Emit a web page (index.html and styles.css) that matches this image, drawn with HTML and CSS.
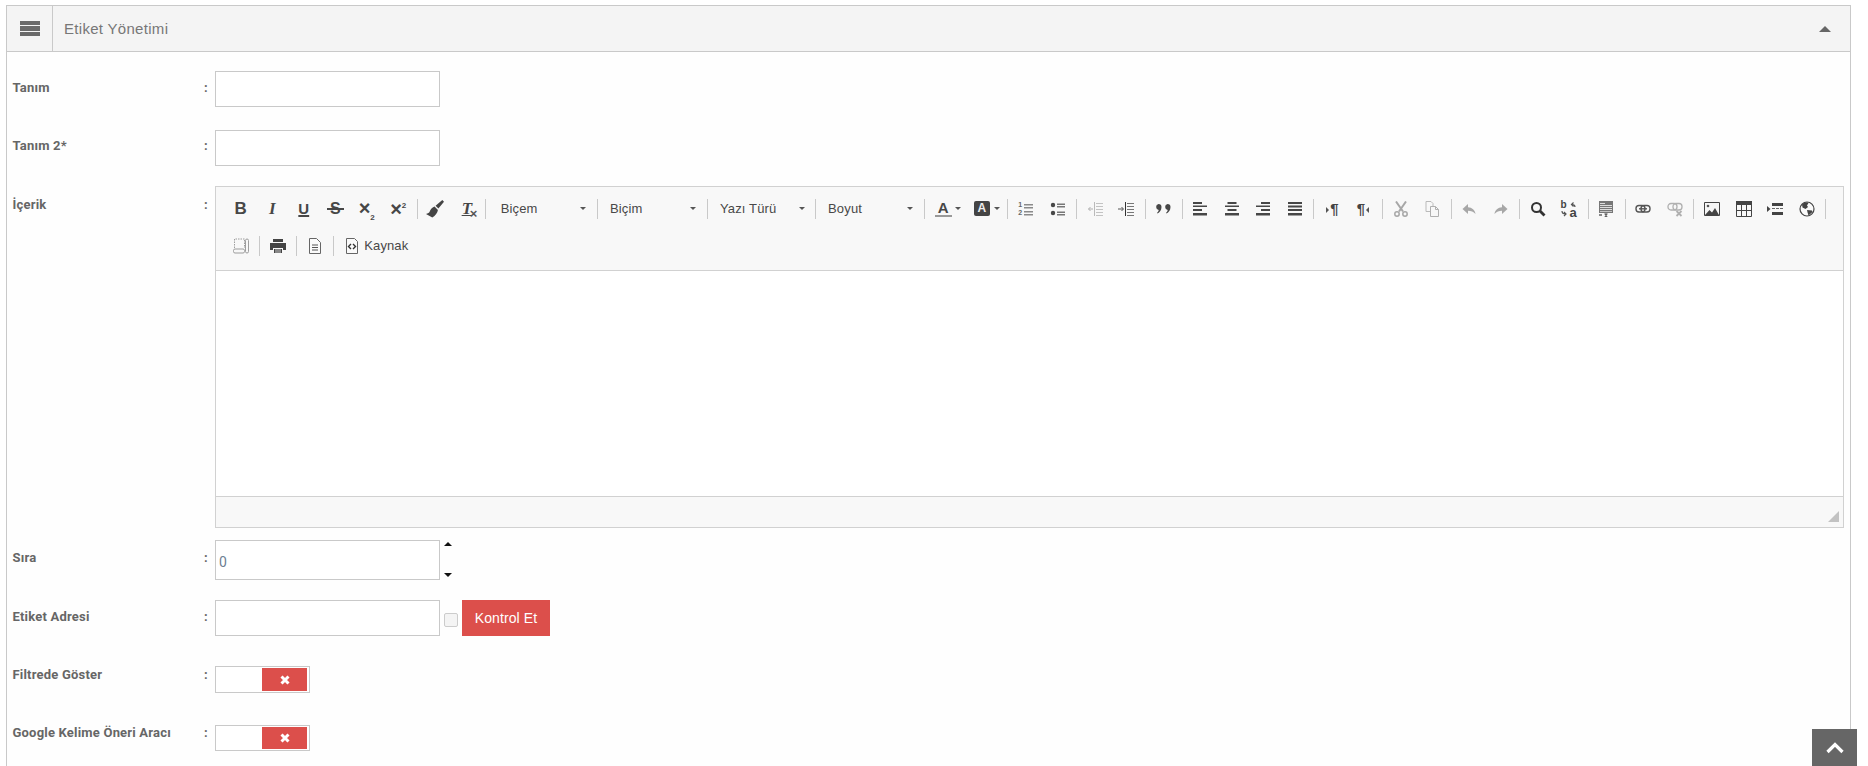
FILE: index.html
```html
<!DOCTYPE html>
<html lang="tr">
<head>
<meta charset="utf-8">
<title>Etiket Yönetimi</title>
<link rel="stylesheet" href="styles.css">
</head>
<body>
<main class="panel">
  <header class="panel-head">
    <div class="menu-cell"><span class="burger"><i></i><i></i><i></i></span></div>
    <h1 class="panel-title">Etiket Yönetimi</h1>
    <span class="collapse-caret"></span>
  </header>
  <form class="form">
    <div class="row r1"><label class="lab l17">Tanım</label><span class="colon l17">:</span><input class="field" type="text"></div>
    <div class="row r2"><label class="lab l16">Tanım 2*</label><span class="colon l16">:</span><input class="field" type="text"></div>
    <div class="row r3"><label class="lab l19">İçerik</label><span class="colon l19">:</span>
      <div class="editor">
        <div class="toolbar">
          <div class="tb-row">
            <span class="btn"><b class="t-b">B</b></span>
            <span class="btn"><b class="t-i">I</b></span>
            <span class="btn"><b class="t-u">U</b></span>
            <span class="btn"><b class="t-s">S</b></span>
            <span class="btn"><b class="t-x">×<sub>2</sub></b></span>
            <span class="btn"><b class="t-x">×<sup>2</sup></b></span>
            <span class="sep"></span>
            <span class="btn"><svg class="big" viewBox="0 0 16 16"><path d="M14.500 0L16 1.500l-5 6-2.500-2.500zM7.600 5.800l3 3c-.3 2.500-2.200 5-5 6.700L0 12.400c1.800-.2 2.800-.9 3.300-2.100.8-2.400 2.600-3.900 4.300-4.500z" fill="#444"/></svg></span>
            <span class="btn"><b class="t-i t-clear">T<em>×</em></b></span>
            <span class="sep"></span>
            <span class="combo c1">Biçem<i class="arrow"></i></span><span class="sep"></span>
            <span class="combo c2">Biçim<i class="arrow"></i></span><span class="sep"></span>
            <span class="combo c3">Yazı Türü<i class="arrow"></i></span><span class="sep"></span>
            <span class="combo c4">Boyut<i class="arrow"></i></span><span class="sep"></span>
            <span class="btn wide"><b class="t-a">A</b><i class="arrow"></i></span>
            <span class="btn wide"><b class="t-abg">A</b><i class="arrow"></i></span>
            <span class="sep"></span>
            <span class="btn"><b class="num n1">1</b><b class="num n2">2</b><svg viewBox="0 0 16 16"><path d="M6 3h9v1.500H6zM6 6h9v1.500H6zM6 10h9v1.500H6zM6 13h9v1.500H6z" fill="#8a8a8a"/></svg></span>
            <span class="btn"><svg viewBox="0 0 16 16"><circle cx="3" cy="4" r="2.200" fill="#474747"/><circle cx="3" cy="12" r="2.200" fill="#474747"/><path d="M7 2.500h8V4H7zM7 5h8v1.500H7zM7 10.500h8V12H7zM7 13h8v1.500H7z" fill="#777"/></svg></span>
            <span class="sep"></span>
            <span class="btn off"><svg viewBox="0 0 16 16"><path d="M7.500 1v14" stroke="#888" fill="none"/><path d="M9 2h7v1H9zM9 5h7v1H9zM9 8h7v1H9zM9 11h7v1H9zM9 14h7v1H9z" fill="#999"/><path d="M6 8H1.500M3.500 6l-2 2 2 2" stroke="#777" fill="none"/></svg></span>
            <span class="btn"><svg viewBox="0 0 16 16"><path d="M7.500 1v14" stroke="#333" fill="none"/><path d="M9 2h7v1H9zM9 5h7v1H9zM9 8h7v1H9zM9 11h7v1H9zM9 14h7v1H9z" fill="#777"/><path d="M0 8h5M3.500 6l2 2-2 2" stroke="#555" fill="none"/></svg></span>
            <span class="sep"></span>
            <span class="btn"><svg viewBox="0 0 16 16"><path d="M3.500 3a3 3 0 0 1 3 3c0 3-1.800 5.500-4 6.500L2 11.800c1-.8 1.600-1.700 1.700-2.900A3 3 0 0 1 3.500 3zM12.500 3a3 3 0 0 1 3 3c0 3-1.800 5.500-4 6.500l-.5-.7c1-.8 1.600-1.700 1.700-2.900a3 3 0 0 1-.2-5.900z" fill="#474747"/></svg></span>
            <span class="sep"></span>
            <span class="btn"><svg viewBox="0 0 16 16"><path d="M1 1h9v2H1zM1 4.500h14v1.500H1zM1 8h9v2H1zM1 12h14v2.500H1z" fill="#474747"/></svg></span>
            <span class="btn"><svg viewBox="0 0 16 16"><path d="M3.500 1h9v2h-9zM1 4.500h14v1.500H1zM3.500 8h9v2h-9zM1 12h14v2.500H1z" fill="#474747"/></svg></span>
            <span class="btn"><svg viewBox="0 0 16 16"><path d="M6 1h9v2H6zM1 4.500h14v1.500H1zM6 8h9v2H6zM1 12h14v2.500H1z" fill="#474747"/></svg></span>
            <span class="btn"><svg viewBox="0 0 16 16"><path d="M1 1h14v2H1zM1 4.500h14v2H1zM1 8h14v2H1zM1 12h14v2.500H1z" fill="#474747"/></svg></span>
            <span class="sep"></span>
            <span class="btn"><i class="tri-r"></i><b class="t-para">¶</b></span>
            <span class="btn"><b class="t-para">¶</b><i class="tri-l"></i></span>
            <span class="sep"></span>
            <span class="btn off"><svg viewBox="0 0 16 16"><path d="M3 .5l7 10M13 .5l-7 10" stroke="#666" stroke-width="2" fill="none"/><circle cx="4" cy="13" r="2.200" stroke="#666" stroke-width="1.500" fill="none"/><circle cx="12" cy="13" r="2.200" stroke="#666" stroke-width="1.500" fill="none"/></svg></span>
            <span class="btn off"><svg viewBox="0 0 16 16"><path d="M2 .5h5l2 2v3M2 .5v10h4" stroke="#888" fill="none"/><path d="M6.500 5.500h5l3 3v7h-8zM11.500 5.500v3h3" stroke="#777" fill="none"/></svg></span>
            <span class="sep"></span>
            <span class="btn off"><svg viewBox="0 0 16 16"><path d="M7 3L1.500 8 7 13V9.800c3 0 5.500 1 7.500 3.200C14 9 11 6.300 7 6.200z" fill="#666"/></svg></span>
            <span class="btn off"><svg viewBox="0 0 16 16"><path d="M9 3l5.500 5L9 13V9.800c-3 0-5.500 1-7.500 3.200C2 9 5 6.300 9 6.200z" fill="#666"/></svg></span>
            <span class="sep"></span>
            <span class="btn"><svg viewBox="0 0 16 16"><circle cx="6.500" cy="6.500" r="4.500" stroke="#333" stroke-width="2" fill="none"/><path d="M10 10l4.500 4.500" stroke="#333" stroke-width="2.800" fill="none"/></svg></span>
            <span class="btn"><b class="rep rep-b">b</b><b class="rep rep-a">a</b><svg viewBox="0 0 16 16"><path d="M14 6c0-1.500-.8-2.500-3-2.500M12.500 1.500l-2 2 2 2M1 10c0 2 1 3 3.500 3M3 15l2-2-2-2" stroke="#555" stroke-width="1.200" fill="none"/></svg></span>
            <span class="sep"></span>
            <span class="btn"><svg viewBox="0 0 16 16"><path d="M1 0h14v12H1z" fill="#777"/><path d="M2 2h5v1H2zM2 4h12v1H2zM2 6h12v1H2zM2 8h12v1H2zM2 10h12v.8H2z" fill="#ddd"/><path d="M1 13h3v2H1z" fill="#888"/><path d="M6.500 13h3M8 13v3M6.500 16h3" stroke="#333" fill="none"/></svg></span>
            <span class="sep"></span>
            <span class="btn"><svg viewBox="0 0 16 16"><rect x="1" y="4.500" width="9" height="6.500" rx="3" stroke="#555" stroke-width="1.400" fill="none"/><rect x="6" y="4.500" width="9" height="6.500" rx="3" stroke="#555" stroke-width="1.400" fill="none"/><path d="M4 7.800h8" stroke="#555" stroke-width="1.400"/></svg></span>
            <span class="btn off"><svg viewBox="0 0 16 16"><rect x="1" y="2.500" width="9" height="6.500" rx="3" stroke="#777" stroke-width="1.300" fill="none"/><rect x="6" y="2.500" width="9" height="6.500" rx="3" stroke="#777" stroke-width="1.300" fill="none"/><path d="M9.500 10l5 5M14.500 10l-5 5" stroke="#777" stroke-width="1.800"/></svg></span>
            <span class="sep"></span>
            <span class="btn"><svg viewBox="0 0 16 16"><path d="M.5 1.500h15v13H.5z" fill="#f6f6f6" stroke="#444"/><path d="M1 14l4.500-5 2.500 2.500L11 7l4 7z" fill="#444"/><circle cx="4" cy="5" r="1.300" fill="#555"/></svg></span>
            <span class="btn"><svg viewBox="0 0 16 16"><path d="M0 0h16v4H0z" fill="#444"/><path d="M.5 4v11.500h15V4M5.500 4v11.500M10.500 4v11.500M.5 9.500h15" stroke="#444" fill="none"/></svg></span>
            <span class="btn"><svg viewBox="0 0 16 16"><path d="M0 5v6l3.500-3z" fill="#444"/><path d="M5 2h11v3H5zM5 11h11v3H5z" fill="#444"/><path d="M5 7.500h3M9 7.500h3M13 7.500h3" stroke="#666"/></svg></span>
            <span class="btn"><svg viewBox="0 0 16 16"><circle cx="8" cy="8" r="7" stroke="#444" stroke-width="1.200" fill="#fafafa"/><path d="M3 3.500c2-2 5-2.500 6.500-1.500L8 4.500 9 6 6.500 8 3.500 6.500zM8 9l5 .5.500 1.500-4 3.500-.8-2.500z" fill="#444"/></svg></span>
            <span class="sep"></span>
          </div>
          <div class="tb-row">
            <span class="btn off"><svg viewBox="0 0 16 16"><path d="M1.500 10V1h10v9" stroke="#555" stroke-dasharray="1.500 1" fill="none"/><rect x=".5" y="11" width="11" height="4" rx="1.500" stroke="#555" fill="none"/><rect x="12.500" y="1" width="3" height="14" rx="1.500" stroke="#555" fill="none"/></svg></span>
            <span class="sep"></span>
            <span class="btn"><svg viewBox="0 0 16 16"><path d="M3 1h10v3H3z" fill="#444"/><path d="M0 5h16v7h-3v-2H3v2H0z" fill="#444"/><path d="M4 11h8v4H4z" fill="#444"/><path d="M5 12h6M5 14h6" stroke="#ccc"/></svg></span>
            <span class="sep"></span>
            <span class="btn"><svg viewBox="0 0 16 16"><path d="M2.500.5h7l4 4v11h-11z" fill="#fafafa" stroke="#666"/><path d="M5 7h6M5 9.500h6M5 12h6" stroke="#555"/></svg></span>
            <span class="sep"></span>
            <span class="btn source"><svg viewBox="0 0 16 16"><path d="M2.500.5h8l3 3v12h-11z" fill="#fafafa" stroke="#666"/><path d="M7 6L4.500 8.500 7 11M9 6l2.500 2.500L9 11" stroke="#333" stroke-width="1.400" fill="none"/></svg><span class="source-text">Kaynak</span></span>
          </div>
        </div>
        <div class="edit-area"></div>
        <div class="edit-foot"><span class="resize"></span></div>
      </div>
    </div>
    <div class="row r4"><label class="lab l18">Sıra</label><span class="colon l18">:</span>
      <input class="field tall" type="text" value="0">
      <span class="spin"><i class="up"></i><i class="down"></i></span>
    </div>
    <div class="row r5"><label class="lab l17">Etiket Adresi</label><span class="colon l17">:</span>
      <input class="field" type="text"><input class="check" type="checkbox"><button class="check-btn" type="button">Kontrol Et</button>
    </div>
    <div class="row r6"><label class="lab l9">Filtrede Göster</label><span class="colon l9">:</span>
      <div class="toggle"><span class="off-knob"><svg viewBox="0 0 10 10"><path d="M1.500 1.500l7 7M8.500 1.500l-7 7" stroke="#fff" stroke-width="3"/></svg></span></div>
    </div>
    <div class="row r7"><label class="lab l8">Google Kelime Öneri Aracı</label><span class="colon l8">:</span>
      <div class="toggle"><span class="off-knob"><svg viewBox="0 0 10 10"><path d="M1.500 1.500l7 7M8.500 1.500l-7 7" stroke="#fff" stroke-width="3"/></svg></span></div>
    </div>
  </form>
</main>
<a class="to-top" href="#top"><svg viewBox="0 0 18 12"><path d="M1.500 10L9 2.500 16.500 10" stroke="#fff" stroke-width="3.200" fill="none"/></svg></a>
</body>
</html>
```
FILE: styles.css
```css
* { box-sizing: border-box; }
html, body { height: 766px; overflow: hidden; }
body { margin: 0; background: #fff; font-family: "Liberation Sans", Arial, sans-serif; color: #333; }

.panel { margin: 5px 17px 0 6px; border: 1px solid #c9c9c9; border-bottom: 0; height: 761px; overflow: hidden; background: #fefefe; }
.panel-head { display: flex; align-items: center; height: 46px; background: #f4f4f4; border-bottom: 1px solid #c9c9c9; }
.menu-cell { width: 46px; height: 45px; border-right: 1px solid #c9c9c9; display: flex; align-items: center; justify-content: center; }
.burger { display: flex; flex-direction: column; gap: 1px; width: 20px; }
.burger i { display: block; height: 4.670px; background: #6a6a6a; }
.panel-title { margin: 0 0 0 11px; font: 400 15px "Liberation Sans", Arial, sans-serif; color: #777; letter-spacing: .3px; flex: 1; }
.collapse-caret { width: 0; height: 0; margin-right: 19px; border-left: 6px solid transparent; border-right: 6px solid transparent; border-bottom: 6px solid #666; }

.form { padding: 19px 6px 0 6px; }
.row { display: flex; align-items: flex-start; }
.r1 { margin-bottom: 23px; }
.r2 { margin-bottom: 20px; }
.r3 { margin-bottom: 12px; }
.r4 { margin-bottom: 20px; }
.r5 { margin-bottom: 30px; }
.r6 { margin-bottom: 32px; }
.lab { width: 191px; margin-left: -.5px; margin-right: .5px; font: 700 13px/14px Roboto, sans-serif; letter-spacing: .2px; color: #666; }
.colon { width: 11px; font: 700 13px/14px Roboto, sans-serif; color: #666; }
.l8 { padding-top: 1px; }
.l9 { padding-top: 2px; }
.l16 { padding-top: 9px; }
.l17 { padding-top: 10px; }
.l18 { padding-top: 11px; }
.l19 { padding-top: 12px; }
.field { width: 225px; height: 36px; border: 1px solid #c9c9c9; background: #fff; padding: 0 3px; font: 400 14px Roboto, sans-serif; color: #6d7f92; outline: 0; }
.tall { height: 40px; padding-top: 3px; }

.editor { width: 1629px; border: 1px solid #d1d1d1; }
.toolbar { height: 84px; background: #f8f8f8; border-bottom: 1px solid #d1d1d1; padding: 6px 0 0 9px; }
.tb-row { display: flex; align-items: center; height: 31px; margin-bottom: 6px; }
.btn { position: relative; flex: none; display: flex; align-items: center; justify-content: center; width: 31.5px; height: 31px; color: #474747; }
.btn svg { width: 16px; height: 16px; flex: none; }
.btn svg.big { width: 18px; height: 18px; }
.btn.off svg { opacity: .55; }
.btn.wide { width: 39px; justify-content: flex-start; padding-left: 8px; }
.sep { flex: none; width: 1px; height: 20px; margin: 0 1.85px 0 2.75px; background: #c9c9c9; }
.combo { position: relative; flex: none; height: 31px; line-height: 31px; font-size: 13px; letter-spacing: .15px; color: #484848; }
.c1 { width: 106.200px; padding-left: 12.500px; }
.c2 { width: 104.200px; padding-left: 10px; }
.c3 { width: 102.900px; padding-left: 10.200px; }
.c4 { width: 102.900px; padding-left: 9.800px; }
.arrow { position: absolute; right: 8px; top: 14px; width: 0; height: 0; border-left: 3px solid transparent; border-right: 3px solid transparent; border-top: 3px solid #555; }
.btn.wide .arrow { right: auto; left: 28px; }

.t-b { font: 700 17px "Liberation Sans", sans-serif; }
.t-i { font: italic 700 17px "Liberation Serif", serif; }
.t-u { font: 700 15px "Liberation Sans", sans-serif; text-decoration: underline; text-decoration-thickness: 2px; }
.t-s { position: relative; font: 700 16px "Liberation Sans", sans-serif; }
.t-s::after { content: ""; position: absolute; left: -3px; right: -3px; top: 8px; height: 2px; background: #474747; }
.t-x { font: 700 20px/16px "Liberation Sans", sans-serif; }
.t-x sub, .t-x sup { font-size: 8px; line-height: 0; }
.t-clear { text-decoration: underline; position: relative; }
.t-clear em { font: 700 13px "Liberation Sans", sans-serif; position: absolute; left: 8px; top: 7px; color: #555; }
.t-a { font: 700 15px/15px "Liberation Sans", sans-serif; border-bottom: 2px solid #999; width: 17px; text-align: center; }
.t-abg { font: 700 12px/15px "Liberation Sans", sans-serif; width: 16px; height: 15px; border-radius: 2px; background: #444; color: #eee; text-align: center; }
.t-para { font: 700 15px/16px "Liberation Sans", sans-serif; color: #444; }
.tri-r, .tri-l { width: 0; height: 0; margin: 2px 1px 0; border-top: 3px solid transparent; border-bottom: 3px solid transparent; }
.tri-r { border-left: 3px solid #555; }
.tri-l { border-right: 3px solid #555; }
.num { position: absolute; left: 8px; font: 700 7px/8px "Liberation Sans", sans-serif; color: #666; }
.n1 { top: 8px; }
.n2 { top: 16px; }
.rep { position: absolute; font-family: "Liberation Sans", sans-serif; font-weight: 700; color: #444; }
.rep-b { left: 7px; top: 7px; font-size: 10px; line-height: 10px; }
.rep-a { left: 16px; top: 13px; font-size: 13px; line-height: 13px; }
.source { width: auto; padding-left: 8px; }
.source-text { margin-left: 4px; font-size: 13px; letter-spacing: .1px; color: #484848; }

.edit-area { height: 226px; background: #fff; border-bottom: 1px solid #d1d1d1; }
.edit-foot { position: relative; height: 30px; background: #f8f8f8; }
.resize { position: absolute; right: 4px; bottom: 5px; width: 0; height: 0; border-left: 11px solid transparent; border-bottom: 11px solid #c2c2c2; }

.spin { display: flex; flex-direction: column; justify-content: space-between; height: 40px; padding: 2px 0 3px; margin-left: 4px; }
.spin i { display: block; width: 0; height: 0; border-left: 4px solid transparent; border-right: 4px solid transparent; }
.up { border-bottom: 4px solid #111; }
.down { border-top: 4px solid #111; }

.check { appearance: none; flex: none; width: 14px; height: 14px; margin: 13px 4px 0 4px; border: 1px solid #ccc; border-radius: 2px; background: #f4f4f4; }
.check-btn { width: 88px; height: 36px; border: 0; padding: 0; background: #dc4f4b; color: #fff; font: 400 14px "Liberation Sans", Arial, sans-serif; letter-spacing: .1px; }

.toggle { display: flex; justify-content: flex-end; width: 95px; height: 27px; border: 1px solid #c9c9c9; padding: 1px 2px; background: #fff; }
.r7 .toggle { height: 26px; }
.off-knob { display: flex; align-items: center; justify-content: center; width: 45px; background: #dc4f4b; }
.off-knob svg { width: 10px; height: 10px; }

.to-top { position: fixed; right: 11px; bottom: 0; display: flex; align-items: center; justify-content: center; width: 45px; height: 37px; background: #666; }
.to-top svg { width: 18px; height: 12px; }
```
